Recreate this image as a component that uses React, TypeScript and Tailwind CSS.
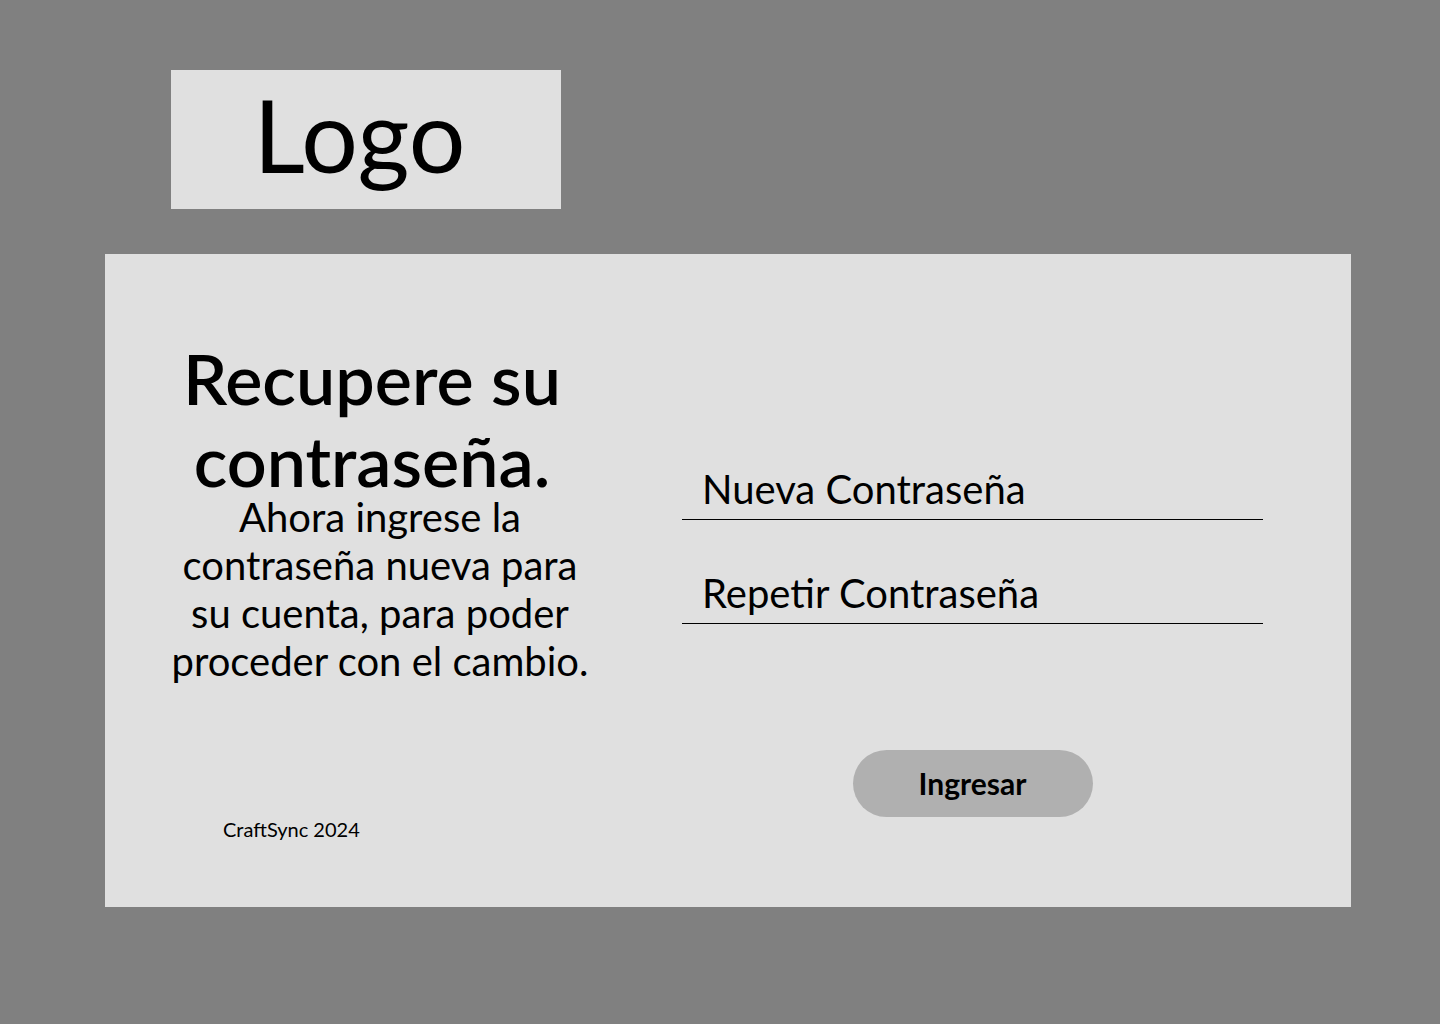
import React from "react";

const font = { fontFamily: "Lato, 'Open Sans', sans-serif" };

export default function App() {
  return (
    <div
      className="min-h-screen w-full bg-[#808080] pt-[70px] text-black"
      style={font}
    >
      <div className="ml-[171px] flex h-[139px] w-[390px] items-center justify-center bg-[#e0e0e0]">
        <span className="pb-3 pr-[13px] text-[100px] leading-none">Logo</span>
      </div>

      <main className="ml-[105px] mt-[45px] flex h-[653px] w-[1246px] bg-[#e0e0e0] pl-[45px]">
        <section className="flex w-[460px] flex-col items-center pt-[83px]">
          <h1 className="pr-4 text-center text-[70px] font-semibold leading-[82px]">
            Recupere su
            <br />
            contraseña.
          </h1>
          <p className="-mt-2 text-center text-[40px] leading-[48px]">
            Ahora ingrese la
            <br />
            contraseña nueva para
            <br />
            su cuenta, para poder
            <br />
            proceder con el cambio.
          </p>
          <span className="ml-[73px] mt-[132px] self-start text-[20px] leading-[24px]">
            CraftSync 2024
          </span>
        </section>

        <section className="ml-[72px] flex w-[581px] flex-col pt-[211px]">
          <label className="border-b border-black pb-[6px] pl-5 text-[40px] leading-[48px]">
            Nueva Contraseña
          </label>
          <label className="mt-[49px] border-b border-black pb-[6px] pl-5 text-[40px] leading-[48px]">
            Repetir Contraseña
          </label>
          <button
            type="button"
            className="mx-auto mt-[126px] h-[67px] w-[240px] rounded-full bg-[#b0b0b0] text-[30px] font-bold"
          >
            Ingresar
          </button>
        </section>
      </main>
    </div>
  );
}
